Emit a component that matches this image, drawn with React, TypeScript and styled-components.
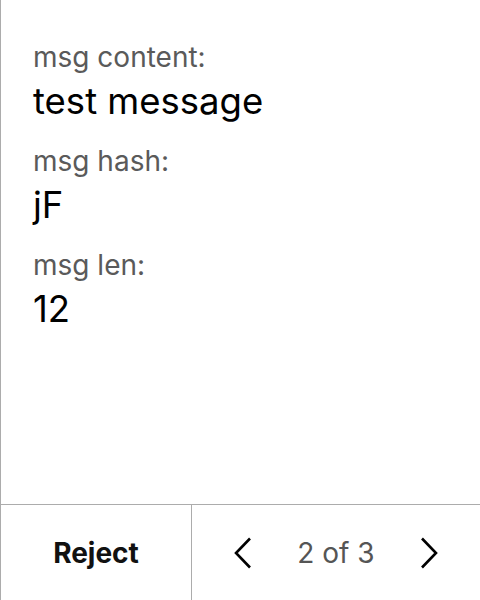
import React from "react";
import styled, { createGlobalStyle } from "styled-components";

const Global = createGlobalStyle`
  html, body { margin: 0; padding: 0; background: #fff; }
  body { font-family: Inter, "Noto Sans", sans-serif; }
  #root { height: 100vh; }
`;

const Screen = styled.div`
  height: 100%;
  display: flex;
  flex-direction: column;
  border-left: 1px solid #acacac;
  box-sizing: border-box;
`;

const Content = styled.div`
  flex: 1;
  display: flex;
  flex-direction: column;
  gap: 16px;
  padding: 38px 0 0 32px;
`;

const Field = styled.div`
  display: flex;
  flex-direction: column;
`;

const Label = styled.div`
  font-size: 28px;
  line-height: 39px;
  color: #5a5a5a;
`;

const Value = styled.div`
  font-size: 36.5px;
  line-height: 49px;
  color: #000;
`;

const Footer = styled.div`
  height: 96px;
  display: grid;
  grid-template-columns: 191px 1fr;
  border-top: 1px solid #acacac;
  box-sizing: border-box;
`;

const RejectButton = styled.button`
  border: none;
  border-right: 1px solid #acacac;
  background: transparent;
  font-family: inherit;
  font-size: 28px;
  font-weight: 700;
  color: #111;
  padding: 0;
  cursor: pointer;
`;

const Pager = styled.div`
  display: flex;
  align-items: center;
  justify-content: center;
  gap: 46px;
`;

const NavButton = styled.button`
  border: none;
  background: transparent;
  padding: 0;
  width: 17px;
  height: 32px;
  display: flex;
  align-items: center;
  justify-content: center;
  cursor: pointer;
`;

const PageText = styled.span`
  font-size: 28px;
  color: #555;
`;

const Chevron = ({ dir }: { dir: "left" | "right" }) => (
  <svg width="17" height="32" viewBox="0 0 17 32" fill="none">
    <polyline
      points={dir === "left" ? "16,1.5 2,16 16,30.5" : "1,1.5 15,16 1,30.5"}
      stroke="#000"
      strokeWidth="2.6"
      strokeLinecap="butt"
      strokeLinejoin="miter"
    />
  </svg>
);

const fields = [
  { label: "msg content:", value: "test message" },
  { label: "msg hash:", value: "jF" },
  { label: "msg len:", value: "12" },
];

export default function App() {
  return (
    <>
      <Global />
      <Screen>
        <Content>
          {fields.map((f) => (
            <Field key={f.label}>
              <Label>{f.label}</Label>
              <Value>{f.value}</Value>
            </Field>
          ))}
        </Content>
        <Footer>
          <RejectButton>Reject</RejectButton>
          <Pager>
            <NavButton aria-label="previous">
              <Chevron dir="left" />
            </NavButton>
            <PageText>2 of 3</PageText>
            <NavButton aria-label="next">
              <Chevron dir="right" />
            </NavButton>
          </Pager>
        </Footer>
      </Screen>
    </>
  );
}
